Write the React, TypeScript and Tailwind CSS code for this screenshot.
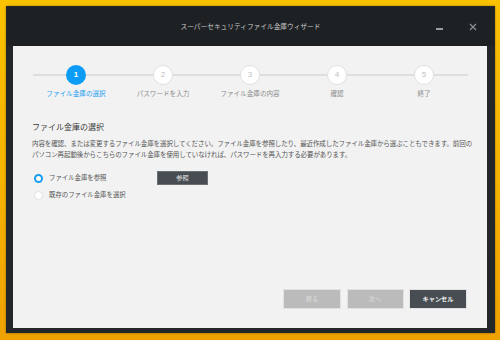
import React from "react";

const F = { fontFamily: '"Noto Sans CJK JP", "Noto Sans", sans-serif' };

const steps = ["ファイル金庫の選択", "パスワードを入力", "ファイル金庫の内容", "確認", "終了"];

export default function App() {
  return (
    <div
      className="w-[500px] h-[340px] overflow-hidden bg-gradient-to-b from-[#fbc200] via-[#f7b400] to-[#f0a200] pt-[6px] pl-[6px]"
      style={F}
    >
      <div className="w-[489px] h-[327px] bg-[#23272a] flex flex-col shadow-[0_0_2px_rgba(0,0,0,0.4)]">
        {/* title bar */}
        <div className="h-[39px] flex items-center bg-[#1e2124] mx-[1px] mt-[1px]">
          <div className="w-[58px]"></div>
          <div className="flex-1 text-center text-[6.7px] text-[#c9c9c9]">スーパーセキュリティファイル金庫ウィザード</div>
          <div className="w-[58px] flex items-center gap-[26px] text-[#8d9094]">
            <div className="w-[7px] h-[1.5px] bg-[#9a9da1] mt-[5px]"></div>
            <svg width="8" height="8" viewBox="0 0 8 8">
              <path d="M1 1 L7 7 M7 1 L1 7" stroke="#8d9094" strokeWidth="1.2" />
            </svg>
          </div>
        </div>
        {/* content */}
        <div className="ml-[7px] w-[474px] h-[282px] bg-[#f2f2f2] flex flex-col">
          {/* stepper */}
          <div className="pl-[19.5px] pt-[19px] grid grid-cols-[repeat(5,87px)]">
            {steps.map((s, i) => (
              <div key={i} className="flex flex-col items-center">
                <div className="flex items-center w-full">
                  <div className="flex-1 h-[1.5px] bg-[#dedede]"></div>
                  {i === 0 ? (
                    <div className="w-[20px] h-[20px] rounded-full bg-[#0d9cf5] flex items-center justify-center text-white text-[8px] font-bold" style={{ fontFamily: '"Liberation Sans", sans-serif' }}>
                      1
                    </div>
                  ) : (
                    <div className="w-[20px] h-[20px] rounded-full bg-white border border-[#e0e0e0] flex items-center justify-center text-[#c0c0c0] text-[8px]" style={{ fontFamily: '"Liberation Sans", sans-serif' }}>
                      {i + 1}
                    </div>
                  )}
                  <div className="flex-1 h-[1.5px] bg-[#dedede]"></div>
                </div>
                <div className={`mt-[3px] text-[6.6px] leading-[10px] whitespace-nowrap ${i === 0 ? "text-[#1c9ef2]" : "text-[#8c8c8c]"}`}>{s}</div>
              </div>
            ))}
          </div>
          {/* section */}
          <div className="pl-[19px] pr-[16px] mt-[23px]">
            <div className="text-[8px] leading-[12px] text-[#3a3a3a] whitespace-nowrap">ファイル金庫の選択</div>
            <div className="mt-[5px] text-[6.5px] leading-[11px] text-[#555] whitespace-nowrap tracking-[-0.1px]">
              <div>内容を確認、または変更するファイル金庫を選択してください。ファイル金庫を参照したり、最近作成したファイル金庫から選ぶこともできます。前回の</div>
              <div>パソコン再起動後からこちらのファイル金庫を使用していなければ、パスワードを再入力する必要があります。</div>
            </div>
            <div className="mt-[11px] flex items-center h-[14px]">
              <div className="w-[9px] h-[9px] rounded-full border-[2.5px] border-[#1a9cf0] bg-white ml-[2px]"></div>
              <div className="ml-[6px] w-[108px] text-[6.4px] text-[#555] whitespace-nowrap">ファイル金庫を参照</div>
              <div className="w-[51px] h-[14px] bg-[#474d53] border border-[#6a6f74] flex items-center justify-center text-[6.2px] text-[#e6e6e6]">参照</div>
            </div>
            <div className="mt-[3px] flex items-center h-[14px]">
              <div className="w-[9px] h-[9px] rounded-full border border-[#e2e2e2] bg-white ml-[2px]"></div>
              <div className="ml-[6px] text-[6.4px] text-[#555] whitespace-nowrap">既存のファイル金庫を選択</div>
            </div>
          </div>
          <div className="flex-1"></div>
          {/* buttons */}
          <div className="flex justify-end gap-[5.5px] pr-[20px] pb-[19px]">
            <div className="w-[58px] h-[20px] bg-[#bbbbbb] border border-[#e2e2e2] flex items-center justify-center text-[6.2px] text-[#dedede]">戻る</div>
            <div className="w-[57px] h-[20px] bg-[#bbbbbb] border border-[#e2e2e2] flex items-center justify-center text-[6.2px] text-[#dedede]">次へ</div>
            <div className="w-[58px] h-[20px] bg-[#474d53] border border-[#e2e2e2] flex items-center justify-center text-[6.2px] text-[#f2f2f2] font-bold">キャンセル</div>
          </div>
        </div>
      </div>
    </div>
  );
}
